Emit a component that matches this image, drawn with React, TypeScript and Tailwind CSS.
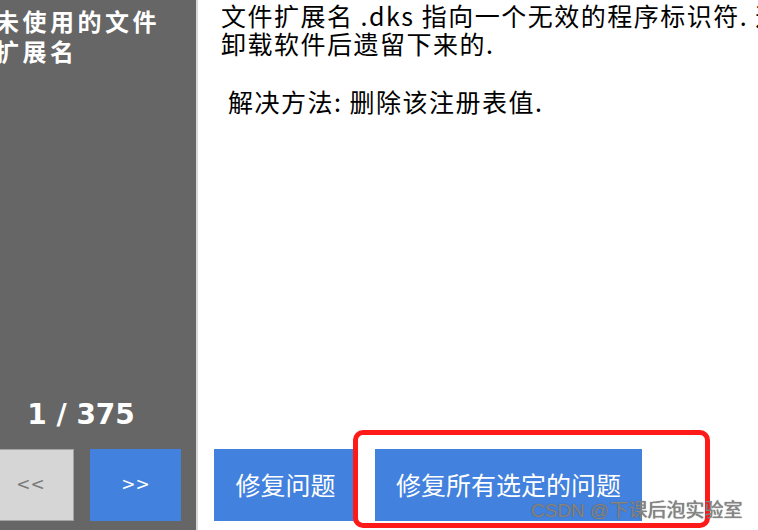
const cjk = "font-['Noto_Sans_CJK_SC',sans-serif]";

function LeftPanel() {
  return (
    <aside className="-ml-[34px] w-[232px] shrink-0 h-full bg-[#666666] border-r-2 border-[#d8d8d8] flex flex-col pb-[9px]">
      <div
        className={`${cjk} pl-[29px] pt-[6px] w-[205px] text-white font-bold text-[24px] leading-[30px] tracking-[3.5px]`}
      >
        未使用的文件扩展名
      </div>
      <div className="flex-1" />
      <div className="text-center text-white font-bold text-[28px] leading-[32px] font-['DejaVu_Sans',sans-serif] pb-[2px]">
        1 / 375
      </div>
      <div className="mt-[16px] flex gap-[16px] pl-[17px]">
        <button
          type="button"
          className="w-[91px] h-[72px] bg-[#d6d6d6] border border-[#a3a3a3] text-[#7a7a7a] text-[17px] font-['DejaVu_Sans',sans-serif] pl-[4px]"
        >
          &lt;&lt;
        </button>
        <button
          type="button"
          className="w-[91px] h-[72px] bg-[#4281dd] text-white text-[17px] font-['DejaVu_Sans',sans-serif]"
        >
          &gt;&gt;
        </button>
      </div>
    </aside>
  );
}

function Detail() {
  return (
    <main className="flex-1 h-full bg-white flex flex-col pl-[16px] pb-[9px] min-w-0">
      <div
        className={`${cjk} pl-[7px] pt-[1px] text-black text-[25px] leading-[28px] tracking-[1.5px] whitespace-nowrap`}
      >
        <div>文件扩展名 .dks 指向一个无效的程序标识符. 这可能是</div>
        <div>卸载软件后遗留下来的.</div>
        <div className="mt-[30px] pl-[7px]">解决方法: 删除该注册表值.</div>
      </div>
      <div className="flex-1" />
      <div className="flex gap-[18px]">
        <button
          type="button"
          className={`${cjk} w-[143px] h-[72px] bg-[#4281dd] text-white text-[25px]`}
        >
          修复问题
        </button>
        <button
          type="button"
          className={`${cjk} w-[267px] h-[72px] bg-[#4281dd] text-white text-[25px]`}
        >
          修复所有选定的问题
        </button>
      </div>
    </main>
  );
}

export default function App() {
  return (
    <div className="relative w-[758px] h-[530px] overflow-hidden flex bg-white">
      <LeftPanel />
      <Detail />
      {/* annotation drawn over the screenshot */}
      <div className="absolute left-[353px] top-[430px] w-[357px] h-[98px] border-[5px] border-[#ff1a1a] rounded-[10px] pointer-events-none" />
      <div className="absolute left-[531px] top-[498px] text-[19px] leading-[26px] text-[#858585] whitespace-nowrap [text-shadow:0_0_1px_#555] font-['Liberation_Sans','Noto_Sans_CJK_SC',sans-serif]">
        CSDN @下课后泡实验室
      </div>
    </div>
  );
}
